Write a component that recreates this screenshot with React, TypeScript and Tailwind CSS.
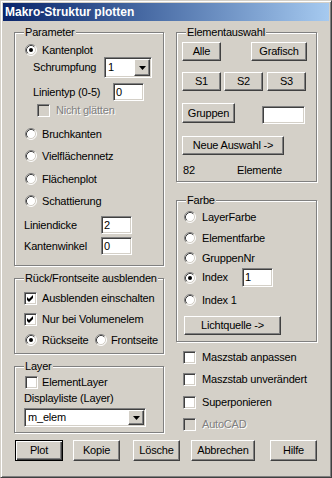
import React from 'react';

const sunken =
  'border border-t-[#808080] border-l-[#808080] border-r-white border-b-white shadow-[inset_1px_1px_0_#404040,inset_-1px_-1px_0_#d4d0c8]';
const raised =
  'border border-t-white border-l-white border-r-[#404040] border-b-[#404040] shadow-[inset_-1px_-1px_0_#808080]';
const disabledText = 'text-[#808080] [text-shadow:1px_1px_0_#fff]';

const Radio = ({ on }: { on?: boolean }) => (
  <svg width="12" height="12" viewBox="0 0 12 12" className="shrink-0">
    <circle cx="6" cy="6" r="5" fill="#fff" />
    <path d="M2.11 9.89A5.5 5.5 0 0 1 9.89 2.11" fill="none" stroke="#808080" />
    <path d="M9.89 2.11A5.5 5.5 0 0 1 2.11 9.89" fill="none" stroke="#fff" />
    <path d="M2.82 9.18A4.5 4.5 0 0 1 9.18 2.82" fill="none" stroke="#404040" />
    <path d="M9.18 2.82A4.5 4.5 0 0 1 2.82 9.18" fill="none" stroke="#d4d0c8" />
    {on && <circle cx="6" cy="6" r="2" fill="#000" />}
  </svg>
);

const Check = ({ on, disabled }: { on?: boolean; disabled?: boolean }) => (
  <div className={`w-[13px] h-[13px] shrink-0 flex items-center justify-center ${sunken} ${disabled ? 'bg-[#d4d0c8]' : 'bg-white'}`}>
    {on && (
      <svg width="9" height="9" viewBox="0 0 9 9">
        <polygon points="1,3 3,5 7,1 7,4 3,8 1,6" fill="#000" />
      </svg>
    )}
  </div>
);

const Btn = ({ children, className = '', def }: { children: React.ReactNode; className?: string; def?: boolean }) => (
  <div
    className={`flex items-center justify-center shrink-0 ${
      def
        ? 'border border-black shadow-[inset_1px_1px_0_#fff,inset_-1px_-1px_0_#404040,inset_-2px_-2px_0_#808080]'
        : raised
    } ${className}`}
  >
    {children}
  </div>
);

const Field = ({ value, className = '' }: { value?: string; className?: string }) => (
  <div className={`flex items-center bg-white pl-[2px] shrink-0 ${sunken} ${className}`}>{value}</div>
);

const Combo = ({ value, className = '' }: { value: string; className?: string }) => (
  <div className={`flex items-stretch bg-white p-px shrink-0 ${sunken} ${className}`}>
    <span className="flex-1 flex items-center pl-[2px]">{value}</span>
    <div className={`w-[16px] flex items-center justify-center bg-[#d4d0c8] ${raised}`}>
      <svg width="7" height="4" viewBox="0 0 7 4">
        <polygon points="0,0 7,0 3.5,4" fill="#000" />
      </svg>
    </div>
  </div>
);

const Group = ({ label, className = '', children }: { label: string; className?: string; children?: React.ReactNode }) => (
  <div className={`relative flex flex-col border border-[#808080] shadow-[inset_1px_1px_0_#fff,1px_1px_0_#fff] ${className}`}>
    <span className="absolute -top-[7px] left-[9px] bg-[#d4d0c8] px-px leading-[13px]">{label}</span>
    {children}
  </div>
);

const row = 'flex items-center h-[16px]';

export default function App() {
  return (
    <div className="w-[332px] h-[478px] bg-[#d4d0c8] border border-t-[#d4d0c8] border-l-[#d4d0c8] border-r-[#404040] border-b-[#404040] shadow-[inset_1px_1px_0_#fff,inset_-1px_-1px_0_#808080] p-[2px] font-['Liberation_Sans',Arial,sans-serif] text-[11px] tracking-[-0.2px] leading-[13px] text-black">
      {/* Title bar */}
      <div className="h-[18px] flex items-center pl-[2px] bg-linear-to-r from-[#0a246a] to-[#a6caf0] text-white font-bold text-[12px] tracking-normal">
        Makro-Struktur plotten
      </div>

      <div className="pl-[11px] pt-[11px]">
        <div className="flex gap-[12px]">
          {/* Left column */}
          <div className="flex flex-col w-[150px]">
            <Group label="Parameter" className="h-[234px]">
              <div className={`${row} mt-[9px] ml-[10px] gap-[5px]`}>
                <Radio on />
                <span>Kantenplot</span>
              </div>
              <div className="flex items-center h-[21px] -mt-px ml-[18px]">
                <span className="w-[71px]">Schrumpfung</span>
                <Combo value="1" className="w-[48px] h-[21px]" />
              </div>
              <div className="flex items-center h-[18px] mt-[5px] ml-[18px]">
                <span className="w-[80px]">Linientyp (0-5)</span>
                <Field value="0" className="w-[31px] h-[18px]" />
              </div>
              <div className={`${row} mt-px ml-[22px] gap-[6px]`}>
                <Check disabled />
                <span className={disabledText}>Nicht glätten</span>
              </div>
              <div className={`${row} mt-[8px] ml-[10px] gap-[5px]`}>
                <Radio />
                <span>Bruchkanten</span>
              </div>
              <div className={`${row} mt-[6px] ml-[10px] gap-[5px]`}>
                <Radio />
                <span>Vielflächennetz</span>
              </div>
              <div className={`${row} mt-[7px] ml-[10px] gap-[5px]`}>
                <Radio />
                <span>Flächenplot</span>
              </div>
              <div className={`${row} mt-[6px] ml-[10px] gap-[5px]`}>
                <Radio />
                <span>Schattierung</span>
              </div>
              <div className="flex items-center h-[18px] mt-[7px] ml-[9px]">
                <span className="w-[77px]">Liniendicke</span>
                <Field value="2" className="w-[31px] h-[18px]" />
              </div>
              <div className="flex items-center h-[18px] mt-[3px] ml-[9px]">
                <span className="w-[77px]">Kantenwinkel</span>
                <Field value="0" className="w-[31px] h-[18px]" />
              </div>
            </Group>

            <Group label="Rück/Frontseite ausblenden" className="h-[76px] mt-[12px]">
              <div className={`${row} mt-[11px] ml-[9px] gap-[5px]`}>
                <Check on />
                <span>Ausblenden einschalten</span>
              </div>
              <div className={`${row} mt-[5px] ml-[9px] gap-[5px]`}>
                <Check on />
                <span>Nur bei Volumenelem</span>
              </div>
              <div className={`${row} mt-[5px] ml-[10px]`}>
                <div className="flex items-center gap-[5px] w-[70px]">
                  <Radio on />
                  <span>Rückseite</span>
                </div>
                <div className="flex items-center gap-[4px]">
                  <Radio />
                  <span>Frontseite</span>
                </div>
              </div>
            </Group>

            <Group label="Layer" className="h-[67px] mt-[12px]">
              <div className={`${row} mt-[7px] ml-[10px] gap-[4px]`}>
                <Check />
                <span>ElementLayer</span>
              </div>
              <div className="flex items-center h-[14px] mt-px ml-[9px]">Displayliste (Layer)</div>
              <Combo value="m_elem" className="w-[122px] h-[19px] mt-[3px] ml-[9px]" />
            </Group>
          </div>

          {/* Right column */}
          <div className="flex flex-col w-[141px]">
            <Group label="Elementauswahl" className="h-[150px]">
              <div className="flex h-[19px] mt-[9px] ml-[5px]">
                <Btn className="w-[39px] h-[19px]">Alle</Btn>
                <Btn className="w-[56px] h-[19px] ml-[30px]">Grafisch</Btn>
              </div>
              <div className="flex h-[19px] mt-[11px] ml-[5px]">
                <Btn className="w-[39px] h-[19px]">S1</Btn>
                <Btn className="w-[39px] h-[19px] ml-[3px]">S2</Btn>
                <Btn className="w-[39px] h-[19px] ml-[4px]">S3</Btn>
              </div>
              <div className="flex h-[21px] mt-[12px] ml-[5px]">
                <Btn className="w-[53px] h-[20px]">Gruppen</Btn>
                <Field className="w-[43px] h-[18px] mt-[3px] ml-[27px]" />
              </div>
              <Btn className="w-[102px] h-[19px] mt-[12px] ml-[5px]">Neue Auswahl -&gt;</Btn>
              <div className="flex items-center h-[14px] mt-[8px] ml-[6px]">
                <span className="w-[54px]">82</span>
                <span>Elemente</span>
              </div>
            </Group>

            <Group label="Farbe" className="h-[142px] mt-[18px]">
              <div className={`${row} mt-[8px] ml-[7px] gap-[6px]`}>
                <Radio />
                <span>LayerFarbe</span>
              </div>
              <div className={`${row} mt-[5px] ml-[7px] gap-[6px]`}>
                <Radio />
                <span>Elementfarbe</span>
              </div>
              <div className={`${row} mt-[4px] ml-[7px] gap-[6px]`}>
                <Radio />
                <span>GruppenNr</span>
              </div>
              <div className="flex items-center h-[19px] mt-[2px] ml-[7px] gap-[6px]">
                <Radio on />
                <span className="w-[40px]">Index</span>
                <Field value="1" className="w-[31px] h-[19px] -ml-[6px]" />
              </div>
              <div className={`${row} mt-[5px] ml-[7px] gap-[6px]`}>
                <Radio />
                <span>Index 1</span>
              </div>
              <Btn className="w-[97px] h-[19px] mt-[8px] ml-[7px]">Lichtquelle -&gt;</Btn>
            </Group>

            <div className={`${row} mt-[7px] ml-[7px] gap-[6px]`}>
              <Check />
              <span>Maszstab anpassen</span>
            </div>
            <div className={`${row} mt-[6px] ml-[7px] gap-[6px]`}>
              <Check />
              <span>Maszstab unverändert</span>
            </div>
            <div className={`${row} mt-[7px] ml-[7px] gap-[6px]`}>
              <Check />
              <span>Superponieren</span>
            </div>
            <div className={`${row} mt-[6px] ml-[7px] gap-[6px]`}>
              <Check disabled />
              <span className={disabledText}>AutoCAD</span>
            </div>
          </div>
        </div>

        {/* Bottom buttons */}
        <div className="flex h-[21px] mt-[7px]">
          <Btn def className="w-[48px] h-[21px] ml-px">Plot</Btn>
          <Btn className="w-[47px] h-[21px] ml-[10px]">Kopie</Btn>
          <Btn className="w-[47px] h-[21px] ml-[13px]">Lösche</Btn>
          <Btn className="w-[64px] h-[21px] ml-[11px]">Abbrechen</Btn>
          <Btn className="w-[47px] h-[21px] ml-[15px]">Hilfe</Btn>
        </div>
      </div>
    </div>
  );
}
